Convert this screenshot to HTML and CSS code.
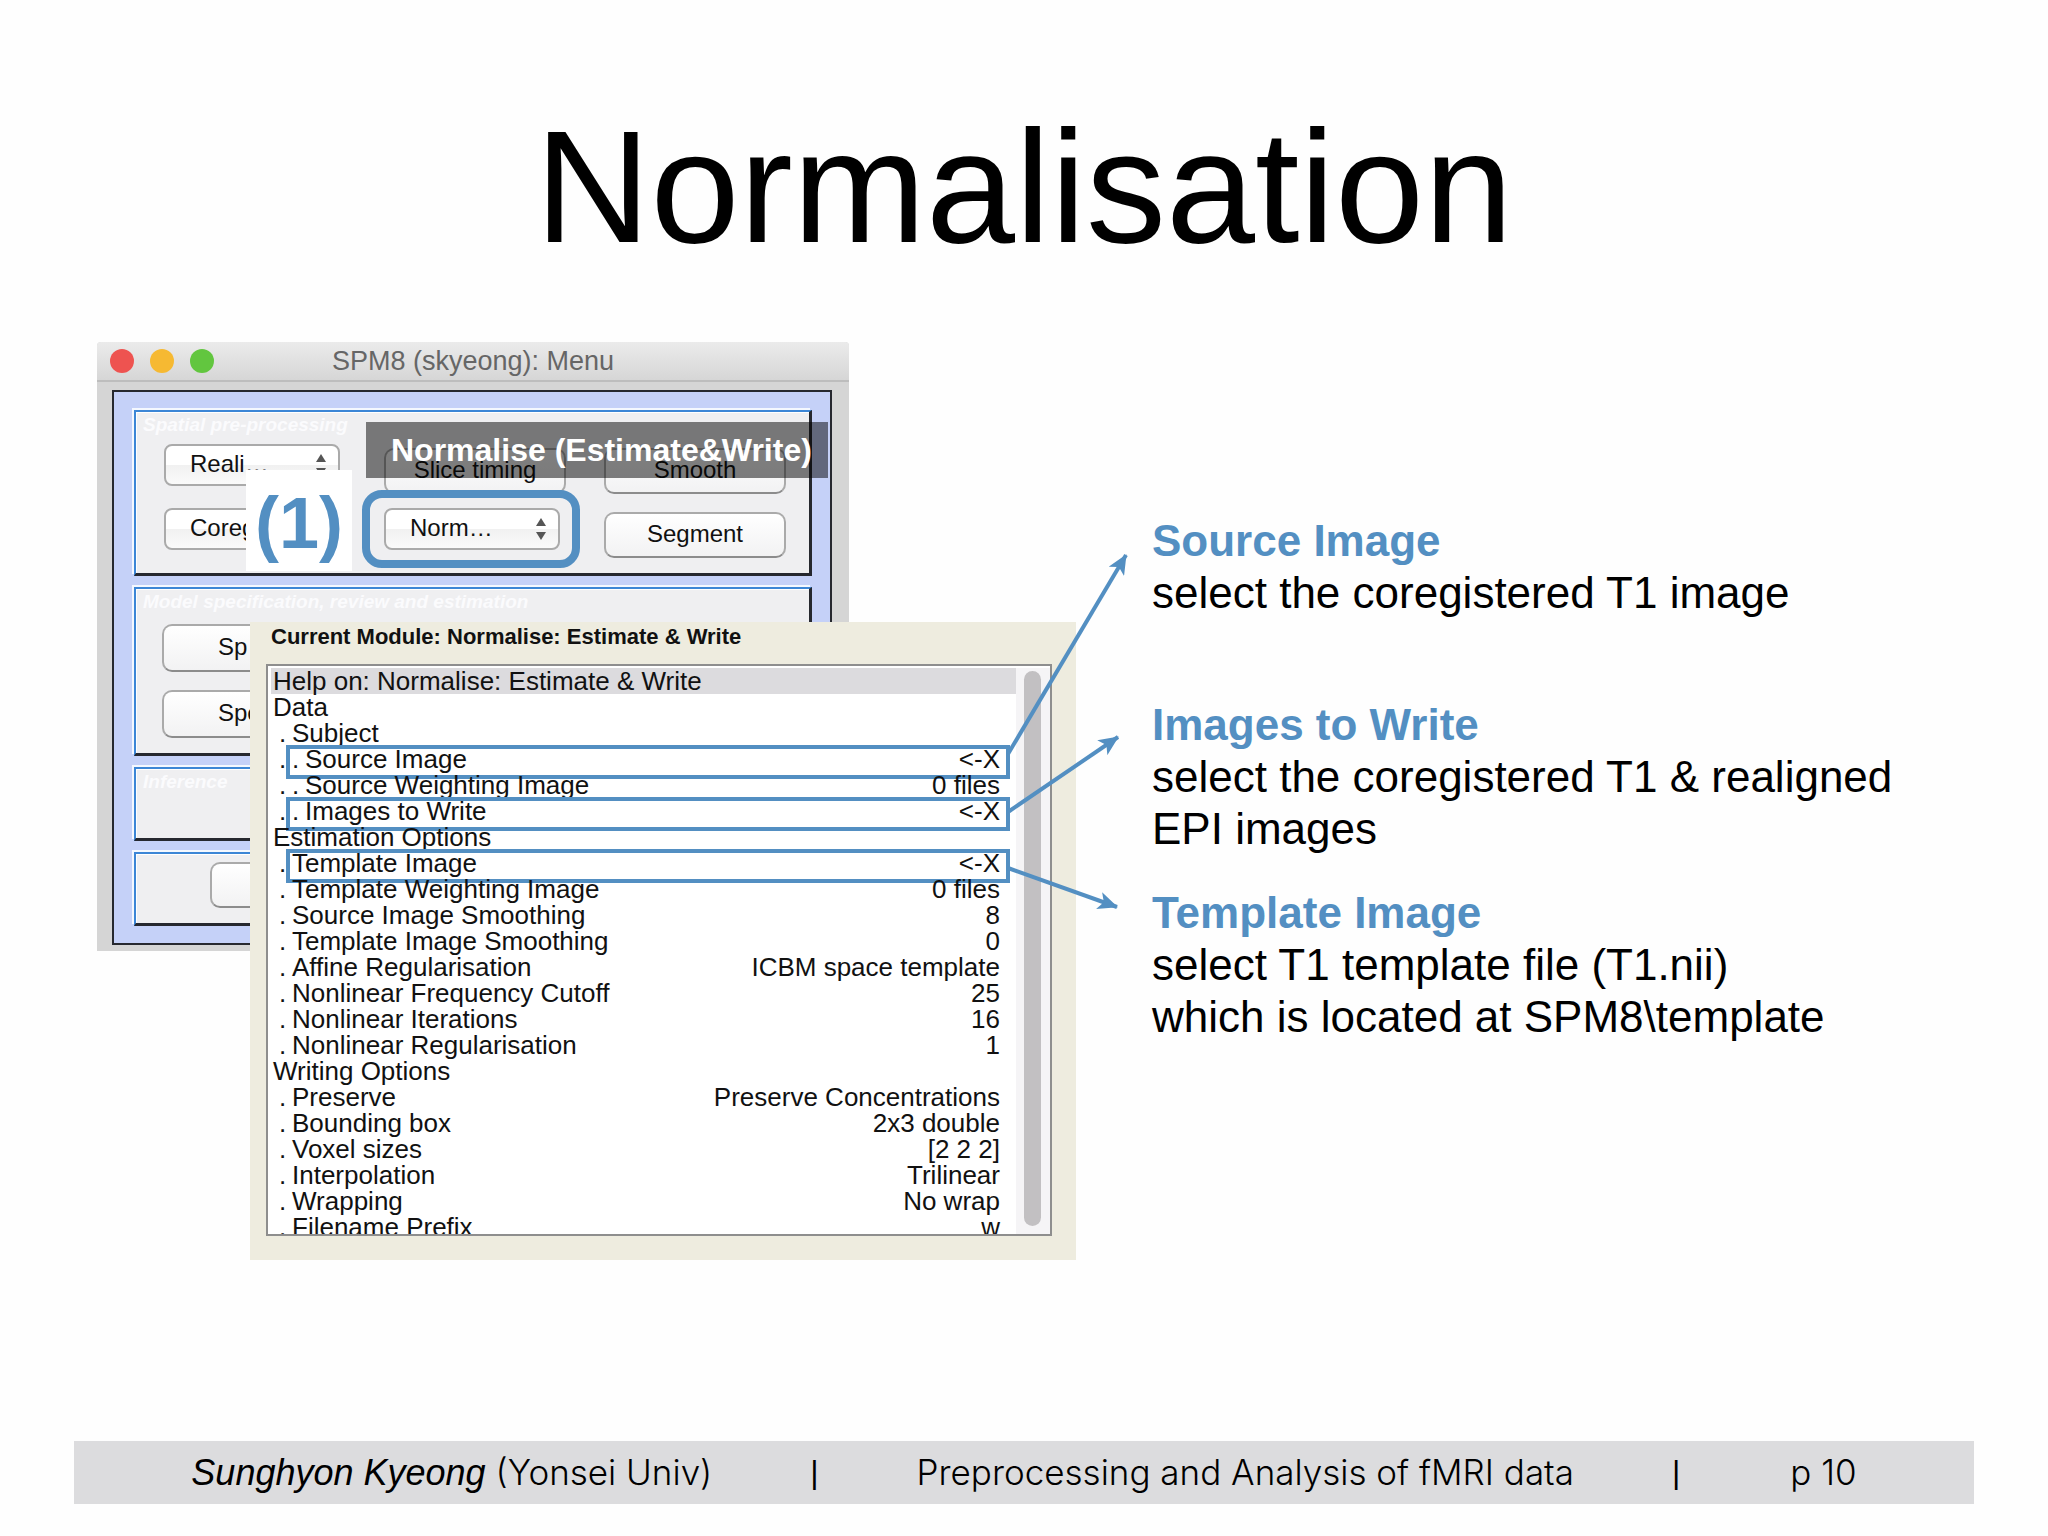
FILE: index.html
```html
<!DOCTYPE html>
<html lang="en">
<head>
    <meta charset="UTF-8">
    <meta name="viewport" content="width=device-width, initial-scale=1.0">
    <title>Normalisation</title>
    <link rel="stylesheet" href="styles.css">
</head>
<body>
    <header class="slide-header">
        <h1>Normalisation</h1>
    </header>

    <main class="slide-main">
        <div class="figure">
            <!-- SPM menu window -->
            <section class="menu-window">
                <div class="titlebar">
                    <span class="light red"></span>
                    <span class="light yellow"></span>
                    <span class="light green"></span>
                    <span class="window-title">SPM8 (skyeong): Menu</span>
                </div>
                <div class="menu-frame">
                    <div class="panel">
                        <h2>Spatial pre-processing</h2>
                        <div class="button-grid">
                            <div class="popup">
                                <select aria-label="Realign"><option>Reali…</option></select>
                                <svg viewBox="0 0 12 24"><path d="M6 1l5 8H1zM6 23l5-8H1z"/></svg>
                            </div>
                            <button type="button">Slice timing</button>
                            <button type="button">Smooth</button>
                            <div class="popup">
                                <select aria-label="Coregister"><option>Coreg…</option></select>
                                <svg viewBox="0 0 12 24"><path d="M6 1l5 8H1zM6 23l5-8H1z"/></svg>
                            </div>
                            <div class="popup">
                                <select aria-label="Normalise"><option>Norm…</option></select>
                                <svg viewBox="0 0 12 24"><path d="M6 1l5 8H1zM6 23l5-8H1z"/></svg>
                            </div>
                            <button type="button">Segment</button>
                        </div>
                    </div>
                    <div class="panel">
                        <h2>Model specification, review and estimation</h2>
                        <div class="button-stack">
                            <button type="button">Sp</button>
                            <button type="button">Spe</button>
                        </div>
                    </div>
                    <div class="panel short">
                        <h2>Inference</h2>
                    </div>
                    <div class="panel short tools">
                        <button type="button" aria-label="Tools"></button>
                    </div>
                </div>
            </section>

            <div class="step-number">(1)</div>
            <div class="step-ring"></div>
            <div class="tooltip">Normalise (Estimate&amp;Write)</div>

            <!-- batch editor module -->
            <section class="module-window">
                <h2>Current Module: Normalise: Estimate &amp; Write</h2>
                <div class="module-list">
                    <table>
                        <tr class="selected"><th colspan="2">Help on: Normalise: Estimate &amp; Write</th></tr>
                        <tr><th>Data</th><td></td></tr>
                        <tr><th class="sub"><i>.</i>Subject</th><td></td></tr>
                        <tr class="marked"><th class="sub"><i>.</i><i>.</i>Source Image</th><td>&lt;-X</td></tr>
                        <tr><th class="sub"><i>.</i><i>.</i>Source Weighting Image</th><td>0 files</td></tr>
                        <tr class="marked"><th class="sub"><i>.</i><i>.</i>Images to Write</th><td>&lt;-X</td></tr>
                        <tr><th>Estimation Options</th><td></td></tr>
                        <tr class="marked"><th class="sub"><i>.</i>Template Image</th><td>&lt;-X</td></tr>
                        <tr><th class="sub"><i>.</i>Template Weighting Image</th><td>0 files</td></tr>
                        <tr><th class="sub"><i>.</i>Source Image Smoothing</th><td>8</td></tr>
                        <tr><th class="sub"><i>.</i>Template Image Smoothing</th><td>0</td></tr>
                        <tr><th class="sub"><i>.</i>Affine Regularisation</th><td>ICBM space template</td></tr>
                        <tr><th class="sub"><i>.</i>Nonlinear Frequency Cutoff</th><td>25</td></tr>
                        <tr><th class="sub"><i>.</i>Nonlinear Iterations</th><td>16</td></tr>
                        <tr><th class="sub"><i>.</i>Nonlinear Regularisation</th><td>1</td></tr>
                        <tr><th>Writing Options</th><td></td></tr>
                        <tr><th class="sub"><i>.</i>Preserve</th><td>Preserve Concentrations</td></tr>
                        <tr><th class="sub"><i>.</i>Bounding box</th><td>2x3 double</td></tr>
                        <tr><th class="sub"><i>.</i>Voxel sizes</th><td>[2 2 2]</td></tr>
                        <tr><th class="sub"><i>.</i>Interpolation</th><td>Trilinear</td></tr>
                        <tr><th class="sub"><i>.</i>Wrapping</th><td>No wrap</td></tr>
                        <tr><th class="sub"><i>.</i>Filename Prefix</th><td>w</td></tr>
                    </table>
                    <div class="scrollbar"><div class="thumb"></div></div>
                </div>
            </section>

            <!-- arrows from the marked rows to the notes -->
            <svg class="arrows" viewBox="0 0 1040 600">
                <defs>
                    <marker id="head" viewBox="0 0 20 18" refX="19" refY="9" markerWidth="20" markerHeight="18" markerUnits="userSpaceOnUse" orient="auto">
                        <path d="M20 9L0 0l5 9-5 9z"/>
                    </marker>
                </defs>
                <path class="line" d="M911 412L1029 213"/>
                <path class="line" d="M911 470L1021 395"/>
                <path class="line" d="M911 526L1020 565"/>
            </svg>
        </div>

        <div class="notes">
            <div class="note">
                <h3>Source Image</h3>
                <p>select the coregistered T1 image</p>
            </div>
            <div class="note">
                <h3>Images to Write</h3>
                <p>select the coregistered T1 &amp; realigned<br>EPI images</p>
            </div>
            <div class="note">
                <h3>Template Image</h3>
                <p>select T1 template file (T1.nii)<br>which is located at SPM8\template</p>
            </div>
        </div>
    </main>

    <footer class="slide-footer">
        <span><em>Sunghyon Kyeong </em>(Yonsei Univ)</span>
        <span class="divider">|</span>
        <span>Preprocessing and Analysis of fMRI data</span>
        <span class="divider">|</span>
        <span class="page">p 10</span>
    </footer>
</body>
</html>
```
FILE: styles.css
```css
*,
*::after {
    box-sizing: border-box;
}

body {
    margin: 0;
    min-height: 100vh;
    display: flex;
    flex-direction: column;
    background-color: #fefefe;
    color: #000;
    font-family: "Liberation Sans", Arial, sans-serif;
}

h1, h2, h3, p {
    margin: 0;
}

.slide-header {
    padding: 95px 0 63px;
    text-align: center;
}

h1 {
    font-size: 160px;
    font-weight: normal;
    line-height: 184px;
}

.slide-main {
    display: grid;
    grid-template-columns: 978px 1fr;
    column-gap: 77px;
    padding: 0 97px;
}

.figure {
    position: relative;
    min-height: 918px;
}

/* menu window */
.menu-window {
    position: absolute;
    top: 0;
    left: 0;
    width: 752px;
    padding: 0 17px 6px 15px;
    background-color: #d5d5d5;
    border-radius: 4px 4px 0 0;
}

.titlebar {
    position: relative;
    display: flex;
    align-items: center;
    gap: 16px;
    height: 40px;
    margin: 0 -17px 8px -15px;
    padding: 0 13px;
    background: linear-gradient(#ebebeb, #d6d6d6);
    border-bottom: 2px solid #bdbdbd;
    border-radius: 4px 4px 0 0;
}

.light {
    width: 24px;
    height: 24px;
    border-radius: 50%;
}

.red {
    background-color: #ee5350;
}

.yellow {
    background-color: #f6b932;
}

.green {
    background-color: #62c63f;
}

.window-title {
    position: absolute;
    left: 0;
    right: 0;
    text-align: center;
    font-size: 27px;
    color: #666;
}

.menu-frame {
    display: flex;
    flex-direction: column;
    gap: 11px;
    padding: 18px 18px 17px 20px;
    background-color: #c5d1f8;
    border: 2px solid #26282f;
}

.panel {
    padding-bottom: 15px;
    background-color: #efeff1;
    border: 2px solid;
    border-width: 2px 3px 3px 2px;
    border-color: #3c86d6 #26282f #26282f #3c86d6;
    box-shadow: -2px -2px 0 #f4f8ff, inset 1px 1px 0 #fff;
}

.panel h2 {
    padding: 1px 0 0 7px;
    font-size: 19px;
    font-style: italic;
    line-height: 24px;
    color: #fbfbfd;
}

.short {
    height: 74px;
}

.tools {
    padding: 8px 0 0 74px;
}

.button-grid {
    display: grid;
    grid-template-columns: repeat(3, 182px);
    grid-auto-rows: 50px;
    gap: 14px 38px;
    margin: 7px 0 0 28px;
}

.button-stack {
    display: grid;
    grid-template-columns: 182px;
    grid-auto-rows: 48px;
    gap: 18px;
    margin: 10px 0 0 26px;
}

.button-stack button {
    height: 48px;
    padding-left: 54px;
    text-align: left;
}

button,
select {
    font-family: inherit;
    font-size: 24px;
    color: #111;
    border: 2px solid #aaa;
    border-radius: 10px;
}

button {
    align-self: end;
    width: 182px;
    height: 46px;
    padding: 0 0 2px;
    background: linear-gradient(#fff, #f2f2f3);
    border-bottom-color: #8c8c8c;
}

.popup {
    position: relative;
    width: 176px;
    height: 42px;
}

.popup select {
    width: 100%;
    height: 100%;
    padding: 0 24px 4px;
    appearance: none;
    background: linear-gradient(#fff 50%, #f1f1f1 50%, #fafafa);
    border-radius: 8px;
}

.popup svg {
    position: absolute;
    right: 13px;
    top: 9px;
    width: 12px;
    height: 24px;
    fill: #555;
}

/* overlays on the menu */
.step-number {
    position: absolute;
    left: 149px;
    top: 128px;
    width: 106px;
    padding-top: 6px;
    background-color: #fff;
    color: #538fc2;
    font-size: 72px;
    font-weight: bold;
    line-height: 95px;
    text-align: center;
}

.step-ring {
    position: absolute;
    left: 265px;
    top: 148px;
    width: 218px;
    height: 78px;
    border: 8px solid #538fc2;
    border-radius: 20px;
}

.tooltip {
    position: absolute;
    left: 269px;
    top: 80px;
    width: 462px;
    padding-left: 25px;
    background-color: rgba(0, 0, 0, 0.5);
    color: #fff;
    font-size: 32px;
    font-weight: bold;
    line-height: 56px;
    white-space: nowrap;
}

/* module window */
.module-window {
    position: absolute;
    left: 153px;
    top: 280px;
    width: 826px;
    padding: 0 24px 24px 16px;
    background-color: #eeecdf;
}

.module-window h2 {
    margin-bottom: 12px;
    padding-left: 5px;
    font-size: 22px;
    line-height: 30px;
    color: #111;
}

.module-list {
    display: flex;
    height: 572px;
    padding: 2px 0 0 3px;
    overflow: hidden;
    background-color: #fff;
    border: 2px solid #8e8e8e;
}

table {
    flex: 1;
    border-collapse: collapse;
    font-size: 26px;
    line-height: 26px;
    color: #111;
}

tr {
    position: relative;
    height: 26px;
}

th,
td {
    padding: 0 16px 0 2px;
    font-weight: normal;
    text-align: left;
    white-space: nowrap;
}

td {
    text-align: right;
}

th.sub {
    padding-left: 8px;
}

th i {
    display: inline-block;
    width: 13px;
    font-style: normal;
}

.selected {
    background-color: #dcdbde;
}

.marked::after {
    content: "";
    position: absolute;
    left: 15px;
    right: 6px;
    top: -1px;
    height: 34px;
    border: 4px solid #538fc2;
}

.scrollbar {
    width: 34px;
    padding: 3px 9px 8px 8px;
    background-color: #f5f4f6;
}

.thumb {
    height: 100%;
    background-color: #c2c0c2;
    border-radius: 9px;
}

.arrows {
    position: absolute;
    left: 0;
    top: 0;
    width: 1040px;
    height: 600px;
    fill: #538fc2;
}

.arrows .line {
    fill: none;
    stroke: #538fc2;
    stroke-width: 4;
    marker-end: url(#head);
}

/* notes */
.notes {
    padding-top: 173px;
    font-size: 44px;
    line-height: 52px;
}

.note {
    min-height: 152px;
    margin-bottom: 32px;
}

.note h3 {
    font-size: 44px;
    color: #538fc2;
}

.slide-footer {
    display: flex;
    justify-content: center;
    gap: 98px;
    margin: auto 74px 32px;
    background-color: #dcdcde;
    font-family: Inter, "Liberation Sans", sans-serif;
    font-size: 35px;
    font-weight: 300;
    line-height: 62px;
}

.slide-footer em,
.divider {
    font-family: "Liberation Sans", Arial, sans-serif;
    font-size: 36px;
    font-weight: normal;
}

.divider {
    font-size: 32px;
}

.page {
    padding-left: 12px;
}
```
